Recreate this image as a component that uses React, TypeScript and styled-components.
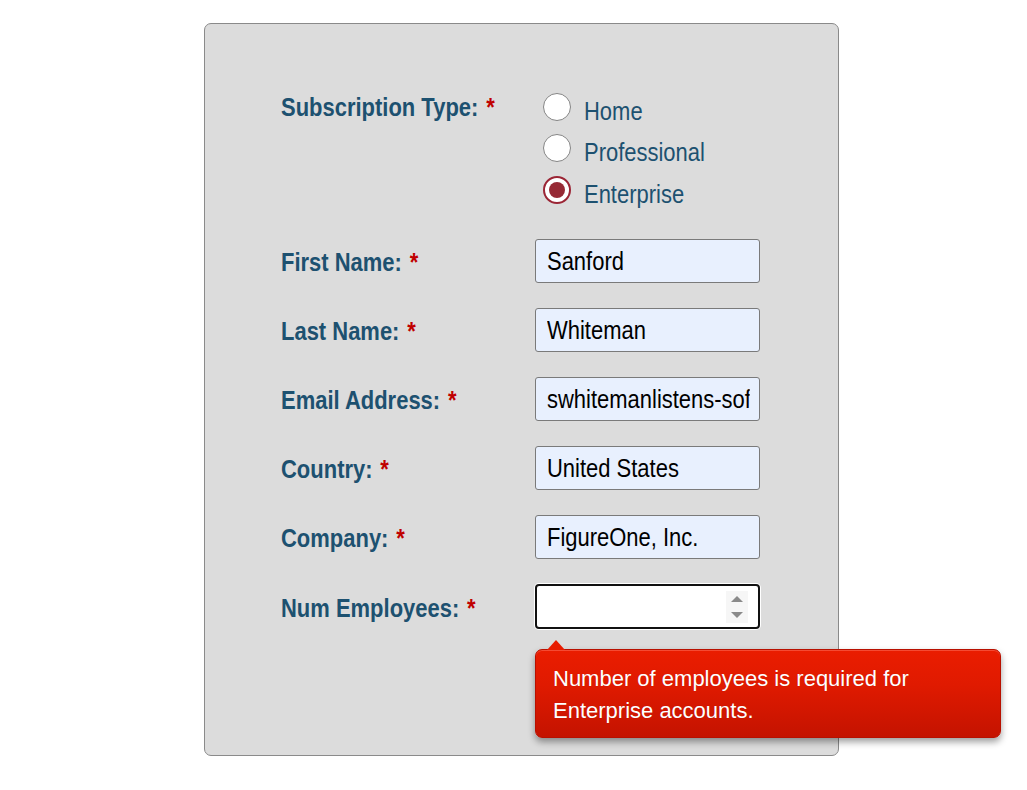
import React from "react";
import styled, { createGlobalStyle } from "styled-components";

const GlobalStyle = createGlobalStyle`
  html, body { margin: 0; padding: 0; background: #ffffff; }
  body { font-family: "Liberation Sans", Arial, sans-serif; }
  * { box-sizing: border-box; }
`;

const NARROW = 0.845;

const Page = styled.div`
  padding: 23px 0 0 204px;
  min-height: 790px;
`;

const Panel = styled.form`
  width: 635px;
  height: 733px;
  background: #dcdcdc;
  border: 1px solid #8a8a8a;
  border-radius: 7px;
  padding: 62px 0 0 76px;
  display: flex;
  flex-direction: column;
  gap: 25px;
`;

const Row = styled.div<{ $top?: boolean }>`
  display: grid;
  grid-template-columns: 254px 225px;
  align-items: ${(p) => (p.$top ? "start" : "center")};
  margin-bottom: ${(p) => (p.$top ? "3.5px" : "0")};
`;

/* condensed rendering of Arial-metric text (the reference uses a narrow face) */
const Narrow = styled.span<{ $drop?: number }>`
  display: inline-block;
  white-space: nowrap;
  transform: scaleX(${NARROW});
  transform-origin: 0 50%;
  padding-top: ${(p) => p.$drop ?? 0}px;
`;

const Label = styled.label<{ $top?: boolean }>`
  font-family: "Liberation Sans", Arial, sans-serif;
  font-weight: bold;
  font-size: 26px;
  line-height: ${(p) => (p.$top ? "41.5px" : "30px")};
  padding-top: ${(p) => (p.$top ? "1px" : "2px")};
  color: #1d5170;
  white-space: nowrap;
`;

const Req = styled.span`
  color: #c00000;
  margin-left: 2px;
`;

const RadioGroup = styled.div`
  display: flex;
  flex-direction: column;
  margin-left: 8px;
`;

const RadioOption = styled.label`
  display: flex;
  align-items: center;
  gap: 13px;
  height: 41.5px;
  font-family: "Liberation Sans", Arial, sans-serif;
  font-size: 26px;
  line-height: 30px;
  color: #1d5170;
  white-space: nowrap;
  cursor: pointer;
`;

const RadioCircle = styled.span<{ $checked?: boolean }>`
  width: 28px;
  height: 28px;
  flex: none;
  border-radius: 50%;
  background: #ffffff;
  border: ${(p) => (p.$checked ? "2px solid #9b2535" : "1.5px solid #858585")};
  display: flex;
  align-items: center;
  justify-content: center;
  &::after {
    content: "";
    display: ${(p) => (p.$checked ? "block" : "none")};
    width: 16px;
    height: 16px;
    border-radius: 50%;
    background: #962a35;
  }
`;

const InputBox = styled.div`
  width: 225px;
  height: 44px;
  border: 1px solid #7a7a7a;
  border-radius: 3px;
  background: #e8f0fe;
  padding: 0 11px;
  display: flex;
  align-items: center;
  overflow: hidden;
`;

const InnerInput = styled.input`
  flex: none;
  width: ${203 / NARROW}px;
  height: 40px;
  border: none;
  outline: none;
  padding: 0;
  background: transparent;
  font-family: "Liberation Sans", Arial, sans-serif;
  font-size: 26px;
  color: #000000;
  transform: scaleX(${NARROW});
  transform-origin: 0 50%;
`;

const FieldWrap = styled.div`
  position: relative;
`;

const NumberBox = styled.div`
  width: 225px;
  height: 45px;
  border: 2px solid #111111;
  border-radius: 4px;
  background: #ffffff;
  box-shadow: 0 0 0 1px #ffffff;
  display: flex;
  align-items: center;
  padding: 0 10px 0 10px;
`;

const NumberInput = styled.input`
  flex: 1;
  min-width: 0;
  border: none;
  outline: none;
  padding: 0;
  background: transparent;
  font-family: "Liberation Sans", Arial, sans-serif;
  font-size: 26px;
  color: #000;
`;

const Spinner = styled.div`
  width: 22px;
  height: 32px;
  background: #f6f6f6;
  display: flex;
  flex-direction: column;
  align-items: center;
  justify-content: center;
  gap: 10px;
`;

const Tooltip = styled.div`
  position: absolute;
  top: 65px;
  left: 0;
  width: 466px;
  padding: 13px 18px 10px 17px;
  border-radius: 7px;
  border: 1px solid #b81000;
  background: linear-gradient(to bottom, #ea1d00 0%, #e01a00 40%, #c41300 100%);
  box-shadow: 0 4px 7px rgba(0, 0, 0, 0.38), inset 0 1px 0 rgba(255, 120, 100, 0.5);
  font-family: "Liberation Sans", Arial, sans-serif;
  font-size: 22px;
  line-height: 32px;
  color: #ffffff;
  text-shadow: 0 0 1px rgba(0, 0, 0, 0.15);
  z-index: 2;
  &::before {
    content: "";
    position: absolute;
    top: -10px;
    left: 11px;
    border-left: 9px solid transparent;
    border-right: 9px solid transparent;
    border-bottom: 10px solid #e81c00;
  }
`;

type Field = { label: string; value: string };

const fields: Field[] = [
  { label: "First Name:", value: "Sanford" },
  { label: "Last Name:", value: "Whiteman" },
  { label: "Email Address:", value: "swhitemanlistens-software@example.com" },
  { label: "Country:", value: "United States" },
  { label: "Company:", value: "FigureOne, Inc." },
];

const options = ["Home", "Professional", "Enterprise"];

export default function App() {
  return (
    <Page>
      <GlobalStyle />
      <Panel onSubmit={(e) => e.preventDefault()}>
        <Row $top>
          <Label $top>
            <Narrow>
              Subscription Type: <Req>*</Req>
            </Narrow>
          </Label>
          <RadioGroup>
            {options.map((o) => (
              <RadioOption key={o}>
                <RadioCircle $checked={o === "Enterprise"} />
                <Narrow $drop={8}>{o}</Narrow>
              </RadioOption>
            ))}
          </RadioGroup>
        </Row>
        {fields.map((f) => (
          <Row key={f.label}>
            <Label>
              <Narrow>
                {f.label} <Req>*</Req>
              </Narrow>
            </Label>
            <InputBox>
              <InnerInput defaultValue={f.value} />
            </InputBox>
          </Row>
        ))}
        <Row>
          <Label>
            <Narrow>
              Num Employees: <Req>*</Req>
            </Narrow>
          </Label>
          <FieldWrap>
            <NumberBox>
              <NumberInput inputMode="numeric" />
              <Spinner>
                <svg width="12" height="6" viewBox="0 0 12 6">
                  <polygon points="6,0 12,6 0,6" fill="#8a8a8a" />
                </svg>
                <svg width="12" height="6" viewBox="0 0 12 6">
                  <polygon points="0,0 12,0 6,6" fill="#8a8a8a" />
                </svg>
              </Spinner>
            </NumberBox>
            <Tooltip>Number of employees is required for Enterprise accounts.</Tooltip>
          </FieldWrap>
        </Row>
      </Panel>
    </Page>
  );
}
